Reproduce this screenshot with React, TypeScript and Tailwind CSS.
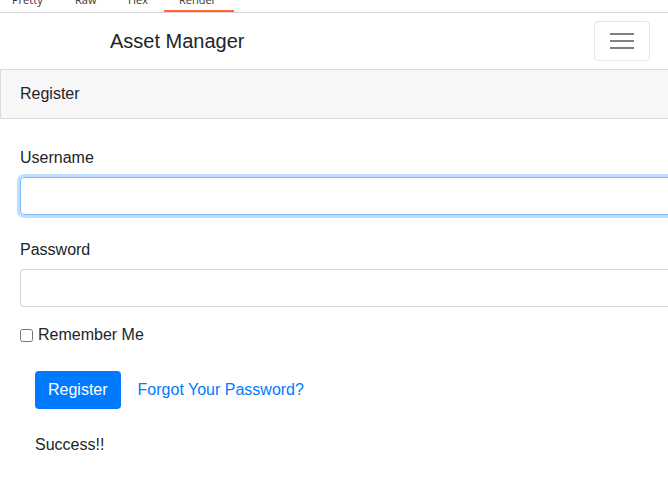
export default function App() {
  const tabs = [
    { label: 'Pretty', w: 'w-[63px]' },
    { label: 'Raw', w: 'w-[53px]' },
    { label: 'Hex', w: 'w-[36px]' },
  ]

  return (
    <div className="h-[491px] w-[668px] overflow-hidden bg-white font-['Liberation_Sans',Arial,sans-serif] text-[#212529]">
      {/* viewer tabs, scrolled off the top */}
      <div className="h-[13px] overflow-hidden border-b border-[#d4d4d4]">
        <div className="-mt-[8px] flex pl-[12px] font-['Open_Sans',sans-serif] text-[11px] leading-[16px] text-[#333]">
          {tabs.map(t => (
            <div key={t.label} className={t.w}>
              {t.label}
            </div>
          ))}
          <div className="flex h-[20px] w-[70px] flex-col">
            <span className="pl-[15px]">Render</span>
            <span className="mt-auto h-[2px] w-full bg-[#ff6633]" />
          </div>
        </div>
      </div>

      {/* navbar */}
      <nav className="flex h-[56px] items-center justify-between pl-[110px] pr-[18px]">
        <span className="text-[20px] leading-[30px]">Asset Manager</span>
        <button className="flex h-[40px] w-[56px] flex-col items-center justify-center gap-[5px] rounded-[4px] border border-[#e5e5e5]">
          <span className="h-[2px] w-[24px] bg-[#808080]" />
          <span className="h-[2px] w-[24px] bg-[#808080]" />
          <span className="h-[2px] w-[24px] bg-[#808080]" />
        </button>
      </nav>

      {/* card */}
      <div className="w-[720px]">
        <div className="border-y border-l border-[#dcdcdc] bg-[#f7f7f7] px-[19px] py-[12px] text-[16px] leading-[24px]">
          Register
        </div>
        <div className="px-[20px] pt-[27px] text-[16px] leading-[24px]">
          <label className="block">Username</label>
          <input
            className="mt-[7px] block h-[38px] w-[700px] rounded-[4px] border border-[#80bdff] shadow-[0_0_0_3px_rgba(0,123,255,0.25)] outline-none"
            type="text"
          />
          <label className="mt-[23px] block">Password</label>
          <input
            className="mt-[7px] block h-[38px] w-[700px] rounded-[4px] border border-[#ced4da] outline-none"
            type="password"
          />
          <div className="mt-[16px] flex items-center gap-[5px]">
            <input type="checkbox" className="m-0 h-[13px] w-[13px]" />
            <span>Remember Me</span>
          </div>
          <div className="mt-[24px] flex items-center gap-[17px] pl-[15px]">
            <button className="h-[38px] rounded-[4px] bg-[#007bff] px-[13px] text-white">Register</button>
            <a className="text-[#007bff]">Forgot Your Password?</a>
          </div>
          <p className="mt-[24px] pl-[15px]">Success!!</p>
        </div>
      </div>
    </div>
  )
}
